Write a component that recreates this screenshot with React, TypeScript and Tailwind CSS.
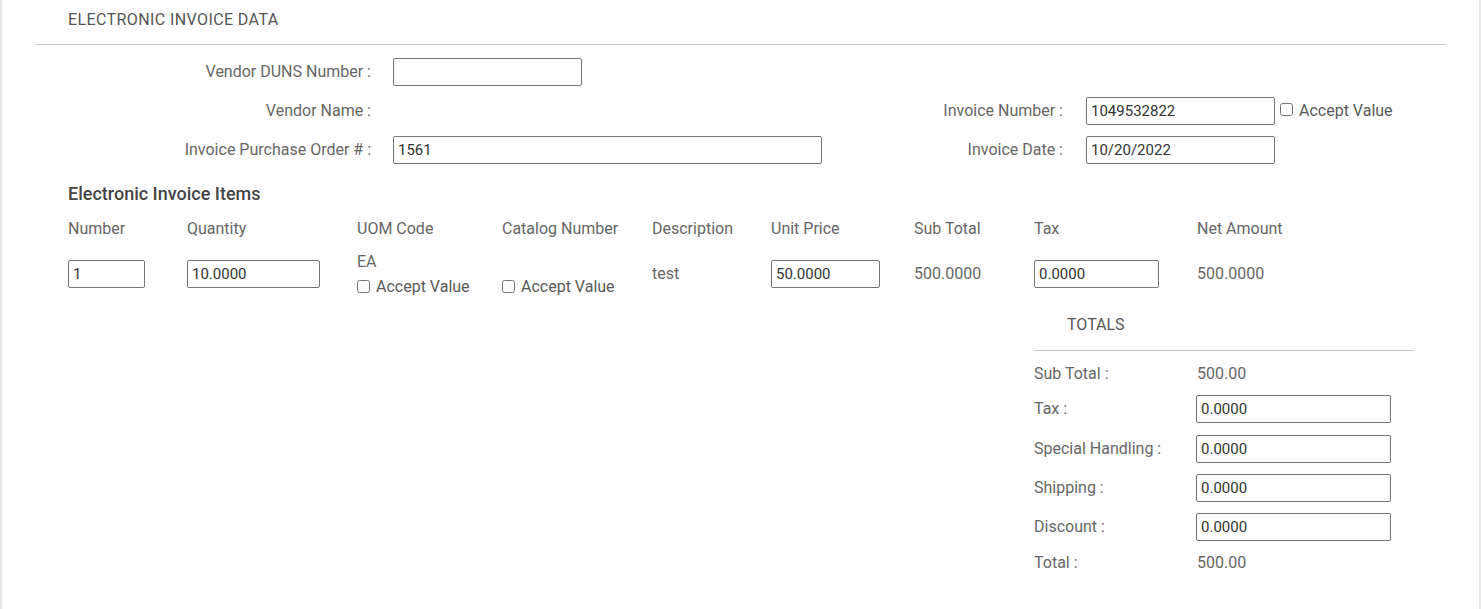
import React from "react";

const inputCls =
  "h-[28px] border border-[#767676] rounded-[2px] bg-white px-[4px] text-[15px] text-[#333] outline-none";

function Check({ label }: { label: string }) {
  return (
    <label className="flex items-center gap-[6px] text-[16px] text-[#5a5a5a]">
      <input type="checkbox" className="m-0 -mt-[2px] h-[13px] w-[13px]" />
      <span>{label}</span>
    </label>
  );
}

export default function App() {
  const cols = [
    "Number",
    "Quantity",
    "UOM Code",
    "Catalog Number",
    "Description",
    "Unit Price",
    "Sub Total",
    "Tax",
    "Net Amount",
  ];
  const grid =
    "grid grid-cols-[119px_170px_145px_150px_119px_143px_120px_163px_1fr]";

  return (
    <div
      className="min-h-[609px] w-full border-x-2 border-[#e8e8e8] bg-white text-[16px] text-[#666]"
      style={{ fontFamily: "Roboto, 'Liberation Sans', sans-serif" }}
    >
      {/* Header */}
      <div className="box-content h-[20px] pl-[66px] pt-[10px] text-[16px] leading-[20px] tracking-[0.4px] text-[#555]">
        ELECTRONIC INVOICE DATA
      </div>
      <div className="mx-[33px] mt-[14px] border-t border-[#c8c8c8]" />

      {/* Form */}
      <div className="mt-[7px] flex flex-col">
        <div className="flex h-[39px] items-center">
          <div className="flex w-[898px] items-center">
            <div className="w-[369px] pt-[1px] text-right">Vendor DUNS Number :</div>
            <input className={`${inputCls} ml-[22px] w-[189px]`} defaultValue="" />
          </div>
        </div>
        <div className="flex h-[39px] items-center">
          <div className="flex w-[898px] items-center">
            <div className="w-[369px] pt-[1px] text-right">Vendor Name :</div>
          </div>
          <div className="flex items-center">
            <div className="w-[163px] pt-[1px] text-right">Invoice Number :</div>
            <input
              className={`${inputCls} ml-[23px] w-[189px]`}
              defaultValue="1049532822"
            />
            <div className="ml-[5px]">
              <Check label="Accept Value" />
            </div>
          </div>
        </div>
        <div className="flex h-[39px] items-center">
          <div className="flex w-[898px] items-center">
            <div className="w-[369px] pt-[1px] text-right">Invoice Purchase Order # :</div>
            <input
              className={`${inputCls} ml-[22px] w-[429px]`}
              defaultValue="1561"
            />
          </div>
          <div className="flex items-center">
            <div className="w-[163px] pt-[1px] text-right">Invoice Date :</div>
            <input
              className={`${inputCls} ml-[23px] w-[189px]`}
              defaultValue="10/20/2022"
            />
          </div>
        </div>
      </div>

      {/* Items */}
      <div className="pl-[66px]">
        <div className="mt-[12px] h-[24px] pt-[1px] text-[18px] font-medium leading-[24px] text-[#444]">
          Electronic Invoice Items
        </div>
        <div className={`${grid} mt-[13px] h-[20px] leading-[20px]`}>
          {cols.map((c) => (
            <div key={c} className="pt-[1px]">
              {c}
            </div>
          ))}
        </div>
        <div className={`${grid} mt-[12px] h-[48px] items-center`}>
          <div>
            <input className={`${inputCls} w-[77px]`} defaultValue="1" />
          </div>
          <div>
            <input className={`${inputCls} w-[133px]`} defaultValue="10.0000" />
          </div>
          <div className="flex flex-col">
            <div className="h-[24px] leading-[24px]">EA</div>
            <div className="flex h-[24px] items-center pt-[2px]">
              <Check label="Accept Value" />
            </div>
          </div>
          <div className="flex flex-col pt-[24px]">
            <div className="flex h-[24px] items-center pt-[2px]">
              <Check label="Accept Value" />
            </div>
          </div>
          <div>test</div>
          <div>
            <input className={`${inputCls} w-[109px]`} defaultValue="50.0000" />
          </div>
          <div>500.0000</div>
          <div>
            <input className={`${inputCls} w-[125px]`} defaultValue="0.0000" />
          </div>
          <div>500.0000</div>
        </div>
      </div>

      {/* Totals */}
      <div className="ml-[1032px] mt-[16px] w-[380px] pb-[37px]">
        <div className="h-[20px] pl-[33px] pt-[1px] leading-[20px] text-[#555]">TOTALS</div>
        <div className="mt-[16px] border-t border-[#c8c8c8]" />
        <div className="mt-[12px] flex h-[20px] items-center pt-[1px]">
          <div className="w-[162px]">Sub Total :</div>
          <div className="pl-[1px]">500.00</div>
        </div>
        {["Tax :", "Special Handling :", "Shipping :", "Discount :"].map(
          (l, i) => (
            <div
              key={l}
              className={`flex h-[28px] items-center ${i < 2 ? "mt-[12px]" : "mt-[11px]"}`}
            >
              <div className="w-[162px]">{l}</div>
              <input className={`${inputCls} w-[195px]`} defaultValue="0.0000" />
            </div>
          )
        )}
        <div className="mt-[11px] flex h-[20px] items-center pt-[1px]">
          <div className="w-[162px]">Total :</div>
          <div className="pl-[1px]">500.00</div>
        </div>
      </div>
    </div>
  );
}
